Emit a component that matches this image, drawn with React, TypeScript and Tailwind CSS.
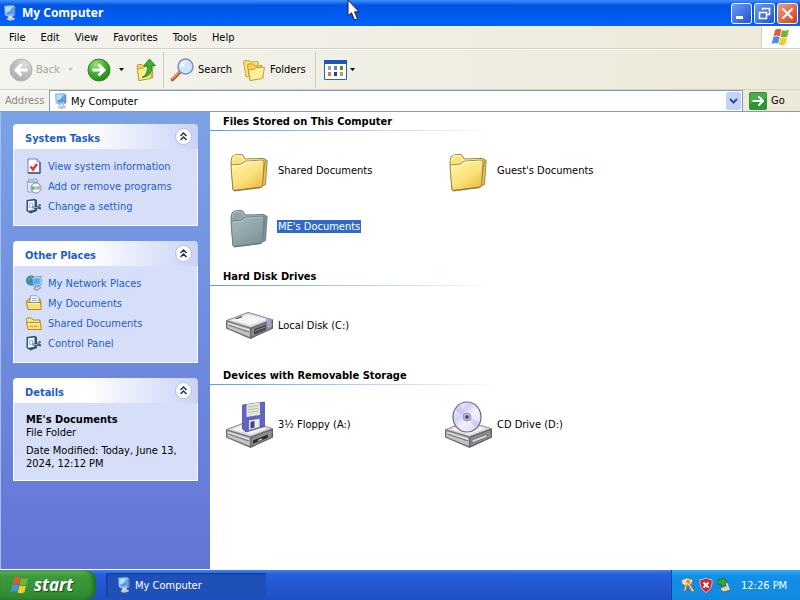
import React from "react";

type IconProps = { className?: string };

function ComputerIcon({ className = "size-4" }: IconProps) {
  return (
    <svg viewBox="0 0 16 16" className={className} aria-hidden="true">
      <path d="M2.500 1 11 .4l2 1.400V10l-2.500 1.200L4.500 11 3 9.500z" fill="#b7d2f3" stroke="#7f9fce" strokeWidth=".6" />
      <path d="M3.500 2 10.800 1.400v7.800L4.600 9.800z" fill="#4a9bf0" />
      <path d="M3.500 2 10.800 1.400 8 6 4.200 7.500z" fill="#b4e0ff" />
      <path d="M11.300 1.300 13 2.400v7.400l-1.700 1z" fill="#5f86c2" />
      <path d="M6 10.800h4.500v1.700l2 .8v1.200L8 15.600 5 14.600v-1.200l1.500-.7z" fill="#e4e9f2" stroke="#8e9cb8" strokeWidth=".6" />
      <path d="M7 14.200l3.500-.6" stroke="#d08a72" strokeWidth=".9" />
    </svg>
  );
}

function WindowsFlag({ className = "size-5" }: IconProps) {
  return (
    <svg viewBox="0 0 20 18" className={className} aria-hidden="true">
      <path d="M4.200 1.800C6.500.4 8.600.6 10.400 1.600L8.900 8.200C7.100 7.200 4.900 7.100 2.600 8.300z" fill="#e8592b" />
      <path d="M11.100 2c1.900 1 4.200 1.100 6.900-.2L16.300 8.600c-2.400 1.300-4.800 1.100-6.700.1z" fill="#72b33c" />
      <path d="M2.400 9.100C4.700 7.900 6.900 8 8.700 9L7.100 15.800C5.300 14.800 2.900 14.700.6 15.900z" fill="#4b8fe0" />
      <path d="M9.400 9.500c1.900 1 4.300 1.100 6.700-.1l-1.700 6.900c-2.400 1.200-4.800 1.100-6.700.1z" fill="#fbc62c" />
    </svg>
  );
}

function FolderIcon({ id, selected = false }: { id: string; selected?: boolean }) {
  const light = selected ? "#abbabd" : "#fff6b0";
  const mid = selected ? "#8fa5a9" : "#fbe27a";
  const dark = selected ? "#7c9296" : "#eebf4e";
  const edge = selected ? "#6a7d84" : "#94803a";
  return (
    <svg viewBox="0 -2 48 48" className="size-12 shrink-0" aria-hidden="true">
      <defs>
        <linearGradient id={id} x1="0" y1="0" x2=".7" y2="1">
          <stop offset="0" stopColor={light} />
          <stop offset=".6" stopColor={mid} />
          <stop offset="1" stopColor={dark} />
        </linearGradient>
      </defs>
      <path d="M6 14 7 9q1-2 4-2.200l5-.3q2 0 3 2.500l1 2 18-.5q3 0 3 3l-1 23L8 42z" fill={mid} stroke={edge} strokeWidth="1" />
      <path d="M7.200 13 8.500 9q1-1.200 3-1.200h4q1.600 0 2.500 2.700l1.500 2 18-.6" fill="none" stroke={light} strokeWidth="1.400" />
      <path d="m40.500 11.500 1.700 1-1.700 24-4 2z" fill={dark} stroke={edge} strokeWidth=".8" />
      <path d="M6 19q0-2 2-2.200l8-.6 4-3 17-1.200q2 0 2 2l-1.500 23q-.2 2-2 2.300L10 42.500q-2 .3-2.100-2z" fill={`url(#${id})`} stroke={edge} strokeWidth=".9" />
      <path d="M7.300 19q0-1 1.400-1.200l8-.6 4-3 16-1.100" fill="none" stroke="#fff" strokeOpacity={selected ? ".25" : ".75"} strokeWidth="1" />
      <path d="m9 42.800 27.500-3.500" stroke={edge} strokeWidth="1.500" />
    </svg>
  );
}

function DriveBase({ y = 0 }: { y?: number }) {
  return (
    <g transform={`translate(0 ${y})`}>
      <path d="M1 19.500 23 11l25 7.500v9L25.500 38 1 27.500z" fill="#66666a" />
      <path d="M2 19.500 23 11.600 47 18.500 25.500 26.500z" fill="#dfdfe2" stroke="#8e8e92" strokeWidth=".7" />
      <path d="m7 19.300 16-5.700 18 5-15.500 5.500z" fill="#f4f4f7" />
      <path d="M2 20.500 25.200 27.500v9L2 27z" fill="#c4c4c7" stroke="#77777b" strokeWidth=".6" />
      <path d="M3.500 24 24 31" stroke="#77777b" strokeWidth="1.200" />
      <path d="M3.500 22.500 24 29.300" stroke="#f2f2f2" strokeWidth=".8" />
      <path d="m26 27.500 21-8v8l-21 9z" fill="#8d8d91" stroke="#555" strokeWidth=".6" />
    </g>
  );
}

function HardDiskIcon() {
  return (
    <svg viewBox="0 0 48 48" className="size-12 shrink-0" aria-hidden="true">
      <DriveBase />
      <path d="m10 17.500 6-2.200 2 .6-6 2.200z" fill="#4b4b50" />
      <path d="m41 17 5.500 1.500v7.500l-3.500 1.300z" fill="#a3a2cc" />
      <path d="m29 28 12-4.600v5.500l-12 4.800z" fill="#4a4a4e" />
      <path d="m30 30 10-3.800" stroke="#999" strokeWidth=".8" />
      <path d="m19 29.500 2 .7" stroke="#6a8f62" strokeWidth="1.400" />
    </svg>
  );
}

function FloppyIcon() {
  return (
    <svg viewBox="0 0 48 48" className="size-12 shrink-0" aria-hidden="true">
      <DriveBase y={10} />
      <path d="m17.500 5 22-3v24.500L21 32l-3.500-3z" fill="#6264c4" stroke="#40429a" strokeWidth=".7" />
      <path d="m21.500 4.400 13.500-1.900v12.500l-13.500 1.900z" fill="#e4e5da" />
      <path d="m23 7 10.500-1.400M23 9.700l10.500-1.400M23 12.400 33.500 11" stroke="#b1b29a" strokeWidth=".8" />
      <path d="m23.500 20 11.500-1.700v9L23.500 30.500z" fill="#e8e9f2" stroke="#444795" strokeWidth=".6" />
      <path d="m25.500 21.700 4-.6v6.500l-4 1z" fill="#42437f" />
      <path d="m28 40.500 15-6v3.200l-15 6z" fill="#2c2c2f" />
      <path d="m33 40.500 4-1.500" stroke="#ddd" strokeWidth="1.300" />
    </svg>
  );
}

function CdDriveIcon() {
  return (
    <svg viewBox="0 0 48 48" className="size-12 shrink-0" aria-hidden="true">
      <defs>
        <linearGradient id="disc" x1="0" y1="0" x2="1" y2="1">
          <stop offset="0" stopColor="#f8f8ff" />
          <stop offset=".35" stopColor="#d2d2f4" />
          <stop offset=".55" stopColor="#f4f0ff" />
          <stop offset="1" stopColor="#d8d8f2" />
        </linearGradient>
      </defs>
      <DriveBase y={10} />
      <path d="m28 40 15-5.700v3L28 43z" fill="#d8d8dc" stroke="#555" strokeWidth=".6" />
      <ellipse cx="23" cy="17" rx="14" ry="15" fill="url(#disc)" stroke="#666a78" strokeWidth="1.200" />
      <path d="m23 17-12-7 5-5zM23 17l12.500 5-4 6z" fill="#c3c1f0" opacity=".65" />
      <circle cx="23" cy="17" r="4" fill="#b7b4dc" stroke="#8582b0" strokeWidth=".7" />
      <circle cx="23" cy="17" r="1.800" fill="#43435c" />
    </svg>
  );
}

function CheckPageIcon() {
  return (
    <svg viewBox="0 0 16 16" className="size-4 shrink-0" aria-hidden="true">
      <path d="M2 1h9l3 3v11H2z" fill="#fff" stroke="#6b7fae" />
      <path d="M14 4v11H2" fill="none" stroke="#3f5487" strokeWidth="1.300" />
      <path d="M11 1v3h3" fill="#c3d2ef" stroke="#6b7fae" strokeWidth=".7" />
      <path d="m4.500 8.500 2.500 3 4-5.500" fill="none" stroke="#e0352b" strokeWidth="2.400" />
    </svg>
  );
}

function ProgramsIcon() {
  return (
    <svg viewBox="0 0 16 16" className="size-4 shrink-0" aria-hidden="true">
      <path d="M1 4h10l2 2v8H2z" fill="#e5ebf6" stroke="#8190b2" strokeWidth=".8" />
      <path d="m2 4 1-3 3 1 2-1.500 3 1L12 4z" fill="#c7d3eb" stroke="#8190b2" strokeWidth=".7" />
      <circle cx="10" cy="10" r="5" fill="#f4f6fb" stroke="#7c8bad" strokeWidth=".9" />
      <path d="M10 10 5.500 7.500v5.500z" fill="#65bd55" />
      <path d="m10 10 4-3v5z" fill="#b4a9e5" />
      <circle cx="10" cy="10" r="1.300" fill="#fff" stroke="#667777" strokeWidth=".6" />
    </svg>
  );
}

function SettingIcon() {
  return (
    <svg viewBox="0 0 16 16" className="size-4 shrink-0" aria-hidden="true">
      <path d="M.5 2 8.500.8 11 2v11l-6.500 2.400L.5 13z" fill="#31517d" />
      <path d="m2 3.300 6.500-.9v9.400L2 12.700z" fill="#f6faff" />
      <path d="M3.500 5.500 6.500 5v4l-3 .5z" fill="none" stroke="#8db3e0" strokeWidth=".9" />
      <path d="M6.500 9.500H11l3.500-3M11 9.500l4 1" fill="none" stroke="#335a72" strokeWidth="2.200" />
      <path d="M7.500 9.500H11l2.700-2.300" fill="none" stroke="#9ec6bf" strokeWidth=".9" />
    </svg>
  );
}

function NetworkIcon() {
  return (
    <svg viewBox="0 0 16 16" className="size-4 shrink-0" aria-hidden="true">
      <circle cx="5" cy="5.500" r="4.700" fill="#3182d5" stroke="#246097" strokeWidth=".5" />
      <path d="M1.500 3.500 5 1l2 1-3 2.500L2 7zM3 7.500l3 .5-1 2z" fill="#58b75d" />
      <path d="m6 2.500 9-1.200v8.700l-7.500 1.200z" fill="#dbe8f9" stroke="#5673a5" strokeWidth=".7" />
      <path d="m7.200 3.700 6.600-.9v6.100L8 9.800z" fill="#49b2f0" />
      <path d="m8 13 3.500-1.700h2l1.500 1.500-4 2.500-3-.8z" fill="#c3cad8" stroke="#606c88" strokeWidth=".6" />
    </svg>
  );
}

function DocumentsIcon({ shared = false }: { shared?: boolean }) {
  return (
    <svg viewBox="0 0 16 16" className="size-4 shrink-0" aria-hidden="true">
      {shared ? (
        <path d="M.5 4q0-1 1-1h4L7 5h7v8H2z" fill="#ffe88a" stroke="#a9821e" strokeWidth=".9" />
      ) : (
        <>
          <path d="M.5 6 3 4h11l1 2-1 8H2z" fill="#f0c64e" stroke="#a9821e" strokeWidth=".9" />
          <path d="M4.500.800H11l2 2V11H3.500z" fill="#fff" stroke="#6f87b6" strokeWidth=".8" />
          <path d="M6 3.500h5M6 5.500h5" stroke="#7fa3dd" strokeWidth=".9" />
        </>
      )}
      <path d="M.5 7.500h14l.8 7H2z" fill="#ffdf70" stroke="#a9821e" strokeWidth=".9" />
      <path d="M2 8.700h11.500" stroke="#fff8cf" />
      {shared && <path d="M4 12q1.500-2.500 3 0M8 12q1.500-2.500 3 0" stroke="#bd9330" fill="none" />}
    </svg>
  );
}

function SmallFolders() {
  return (
    <svg viewBox="0 0 24 24" className="size-6 shrink-0" aria-hidden="true">
      <path d="M1.500 4q0-1.500 1.500-1.500h4L9 4l7-.5v12L4 19z" fill="#f8df72" stroke="#bd9830" strokeWidth=".8" />
      <path d="M5.500 7.500Q5.500 6 7 6h4l2 2 7-.5 1 12L8 22.500z" fill="#f5d257" stroke="#b48c26" strokeWidth=".8" />
      <path d="m6.500 12 6-.7 1.500-1.500 8.500-.5L20.500 20.500 8 22.500z" fill="#ffef9d" stroke="#b48c26" strokeWidth=".8" />
    </svg>
  );
}

function RoundArrow({ id, enabled }: { id: string; enabled: boolean }) {
  return (
    <svg viewBox="0 0 24 24" className={enabled ? "size-6" : "size-6 -scale-x-100"} aria-hidden="true">
      <defs>
        <radialGradient id={id} cx=".35" cy=".25" r=".9">
          <stop offset="0" stopColor={enabled ? "#9be07c" : "#dedede"} />
          <stop offset=".5" stopColor={enabled ? "#3fab2e" : "#bdbdbb"} />
          <stop offset="1" stopColor={enabled ? "#1d7a16" : "#a8a8a6"} />
        </radialGradient>
      </defs>
      <circle cx="12" cy="12" r="11" fill={`url(#${id})`} stroke={enabled ? "#2e8526" : "#b5b5b3"} />
      <path d="M5.500 12h11M11.500 6.500 17 12l-5.500 5.500" fill="none" stroke="#fff" strokeWidth="3" />
    </svg>
  );
}

function Caret({ className }: IconProps) {
  return (
    <svg viewBox="0 0 5 3" className={className} aria-hidden="true">
      <path d="M0 0h5L2.500 3z" fill="currentColor" />
    </svg>
  );
}

function Panel({ title, children }: { title: string; children: React.ReactNode }) {
  return (
    <section>
      <header className="flex h-[25px] items-center justify-between rounded-t-[4px] bg-linear-to-r from-white from-40% to-[#c9d3f7] pr-1.5 pl-3">
        <h2 className="pt-1 font-bold text-[#215dc6]">{title}</h2>
        <button aria-label={`Collapse ${title}`} className="size-[17px]">
          <svg viewBox="0 0 17 17" className="size-[17px]" aria-hidden="true">
            <circle cx="8.500" cy="8.500" r="8" fill="#fff" stroke="#b3bede" />
            <path d="m5.500 8 3-3 3 3M5.500 12l3-3 3 3" fill="none" stroke="#23306a" strokeWidth="1.500" />
          </svg>
        </button>
      </header>
      <div className="border border-t-0 border-white bg-[#d6dff7]">{children}</div>
    </section>
  );
}

function TaskList({ items }: { items: { label: string; icon: React.ReactNode }[] }) {
  return (
    <ul className="pt-[7px] pb-[9px] pl-3">
      {items.map((item) => (
        <li key={item.label}>
          <a href="#" className="flex h-5 items-center gap-1.5 text-[#215dc6]">
            {item.icon}
            {item.label}
          </a>
        </li>
      ))}
    </ul>
  );
}

function Group({ title, children }: { title: string; children: React.ReactNode }) {
  return (
    <section className="mb-5">
      <h2 className="pl-[13px] font-bold">{title}</h2>
      <div className="mt-0.5 h-px w-72 bg-linear-to-r from-[#5c9be8] to-white" />
      <div className="mt-[15px] grid grid-cols-[repeat(auto-fill,219px)] gap-y-2 pl-[15px]">{children}</div>
    </section>
  );
}

function Item({ label, icon, selected = false }: { label: string; icon: React.ReactNode; selected?: boolean }) {
  return (
    <button className="flex h-12 items-center gap-1 text-left">
      {icon}
      <span className={selected ? "bg-[#316ac5] px-px text-white" : "px-px"}>{label}</span>
    </button>
  );
}

const menus = ["File", "Edit", "View", "Favorites", "Tools", "Help"];

export default function App() {
  return (
    <div className="relative flex min-h-screen flex-col overflow-hidden bg-white font-['DejaVu_Sans_Condensed','DejaVu_Sans',sans-serif] text-[11px] leading-[13px] text-black">
      <header className="flex h-[26px] items-center gap-1 bg-linear-to-b from-[#3c90ff] via-[#0054e3] via-20% to-[#0062fb] pr-0.5 pl-0.5">
        <ComputerIcon className="size-4" />
        <h1 className="flex-1 font-['Open_Sans','Noto_Sans',sans-serif] text-[12px] leading-4 font-bold text-white">My Computer</h1>
        <div className="flex gap-0.5">
          <button aria-label="Minimize" className="size-[21px] rounded-[3px] border border-white bg-linear-to-br from-[#6f9bf5] to-[#1f50d6]">
            <svg viewBox="0 0 19 19" aria-hidden="true"><path d="M4 12h7v3H4z" fill="#fff" /></svg>
          </button>
          <button aria-label="Restore" className="size-[21px] rounded-[3px] border border-white bg-linear-to-br from-[#6f9bf5] to-[#1f50d6]">
            <svg viewBox="0 0 19 19" aria-hidden="true">
              <path d="M7.500 6V4.500h7v6H12M7 4.500h8" fill="none" stroke="#fff" strokeWidth="1.500" />
              <path d="M4.500 8.500h7v6h-7zM4 8.500h8" fill="none" stroke="#fff" strokeWidth="1.500" />
            </svg>
          </button>
          <button aria-label="Close" className="size-[21px] rounded-[3px] border border-white bg-linear-to-br from-[#f09a7e] to-[#cf3a12]">
            <svg viewBox="0 0 19 19" aria-hidden="true"><path d="m4.500 4.500 10 10m0-10-10 10" stroke="#fff" strokeWidth="2.200" /></svg>
          </button>
        </div>
      </header>

      <div className="flex h-[23px] border-b border-[#d5d2c0] bg-linear-to-r from-[#f4f4ef] to-[#ece9d8]">
        <nav className="flex flex-1 items-center gap-[15px] pl-[9px]">
          {menus.map((menu) => (
            <button key={menu}>{menu}</button>
          ))}
        </nav>
        <div className="flex w-[39px] items-center justify-center border-l border-[#d5d2c0] bg-white">
          <WindowsFlag className="size-5" />
        </div>
      </div>

      <div className="flex h-[41px] items-center border-t border-b border-t-white border-b-[#d5d2c0] bg-linear-to-r from-[#f4f4ef] to-[#ece9d8] pl-[9px]">
        <button disabled className="flex items-center text-[#aca899]">
          <RoundArrow id="back" enabled={false} />
          <span className="ml-[3px] w-8 text-left">Back</span>
          <Caret className="h-[3px] w-[5px] text-[#c4c1b4]" />
        </button>
        <button aria-label="Forward" className="ml-3.5 flex items-center gap-2">
          <RoundArrow id="forward" enabled />
          <Caret className="h-[3px] w-[5px]" />
        </button>
        <button aria-label="Up" className="ml-2.5">
          <svg viewBox="0 0 24 24" className="size-6" aria-hidden="true">
            <path d="M3 8q0-1.500 1.500-1.500H8l2 2 8-1 1 12L5 22.500z" fill="#f5d257" stroke="#b48c26" strokeWidth=".8" />
            <path d="m3.500 11 6-1 2-1.500 8-.5-3 12.500L5 22.500z" fill="#ffed96" stroke="#b48c26" strokeWidth=".8" />
            <path d="M8 19.500q6-3 5.500-11.500H9.500L15.500 1 21.500 7.500H18q.5 11-10 12z" fill="#3fb033" stroke="#1e7a1b" strokeWidth=".8" />
          </svg>
        </button>
        <div className="ml-[5px] h-9 w-px bg-[#d0cdbf]" />
        <button className="ml-1.5 flex items-center gap-1">
          <svg viewBox="0 0 24 24" className="size-6" aria-hidden="true">
            <path d="M9.500 14.500 2.500 21.500" stroke="#a6603a" strokeWidth="3.600" strokeLinecap="round" />
            <path d="M9 14 2.500 20.500" stroke="#edaa7c" strokeWidth="1.400" strokeLinecap="round" />
            <circle cx="15.500" cy="8.500" r="7.500" fill="#cfe6fd" stroke="#8093c2" strokeWidth="1.600" />
            <path d="M10.500 8.500q0-5 6-5-2 1-3 5z" fill="#fff" />
          </svg>
          Search
        </button>
        <button className="ml-2.5 flex items-center gap-1">
          <SmallFolders />
          Folders
        </button>
        <div className="ml-[9px] h-9 w-px bg-[#d0cdbf]" />
        <button aria-label="Views" className="ml-2 flex items-center gap-[3px]">
          <svg viewBox="0 0 23 20" className="h-5 w-[23px]" aria-hidden="true">
            <path d="M.5.500h22v19H.500z" fill="#fff" stroke="#2c62b8" />
            <path d="M0 0h23v4H0z" fill="#1f55b5" />
            <path d="M4 6h3v4H4z" fill="#8fa2d8" /><path d="M10 6h3v4h-3z" fill="#5c84ca" /><path d="M16 6h3v4h-3z" fill="#3d8d3b" />
            <path d="M4 12h3v4H4z" fill="#df765c" /><path d="M10 12h3v4h-3z" fill="#283b9f" /><path d="M16 12h3v4h-3z" fill="#a2b33b" />
          </svg>
          <Caret className="h-[3px] w-[5px]" />
        </button>
      </div>

      <div className="flex h-[22px] items-stretch border-b border-[#8e9aa3] bg-linear-to-r from-[#f4f4ef] to-[#ece9d8]">
        <label htmlFor="address" className="flex w-[49px] items-center pl-[5px] text-[#8a887b]">Address</label>
        <div className="flex flex-1 items-center border border-b-0 border-[#7f9db9] bg-white pl-[3px]">
          <ComputerIcon className="size-4" />
          <input id="address" defaultValue="My Computer" className="min-w-0 flex-1 pl-0.5 outline-none" />
          <button aria-label="Show addresses" className="mr-px h-[18px] w-[15px] rounded-[2px] bg-[#c3d3fb]">
            <svg viewBox="0 0 15 18" aria-hidden="true"><path d="m4 7 3.500 3.500L11 7" fill="none" stroke="#3c4f82" strokeWidth="2" /></svg>
          </button>
        </div>
        <button className="flex w-[57px] items-center gap-1 pl-1.5">
          <svg viewBox="0 0 18 18" className="size-[18px]" aria-hidden="true">
            <rect width="18" height="18" rx="2" fill="#2f9433" />
            <path d="M1 1h16v6Q8 6 1 12z" fill="#62b761" opacity=".6" />
            <path d="M3.500 9h10M9.500 4.500 14 9l-4.500 4.500" fill="none" stroke="#fff" strokeWidth="2" />
          </svg>
          Go
        </button>
      </div>

      <div className="flex flex-1 border-b border-white">
        <aside className="flex w-[210px] shrink-0 flex-col gap-[15px] border-l border-[#a5bdf0] bg-linear-to-b from-[#7ba2e7] to-[#6375d6] py-3 pr-3 pl-3">
          <Panel title="System Tasks">
            <TaskList
              items={[
                { label: "View system information", icon: <CheckPageIcon /> },
                { label: "Add or remove programs", icon: <ProgramsIcon /> },
                { label: "Change a setting", icon: <SettingIcon /> },
              ]}
            />
          </Panel>
          <Panel title="Other Places">
            <TaskList
              items={[
                { label: "My Network Places", icon: <NetworkIcon /> },
                { label: "My Documents", icon: <DocumentsIcon /> },
                { label: "Shared Documents", icon: <DocumentsIcon shared /> },
                { label: "Control Panel", icon: <SettingIcon /> },
              ]}
            />
          </Panel>
          <Panel title="Details">
            <div className="px-3 py-2.5">
              <p className="font-bold">ME's Documents</p>
              <p>File Folder</p>
              <p className="mt-[5px]">Date Modified: Today, June 13, 2024, 12:12 PM</p>
            </div>
          </Panel>
        </aside>

        <main className="min-w-0 flex-1 pt-[3px]">
          <Group title="Files Stored on This Computer">
            <Item label="Shared Documents" icon={<FolderIcon id="folder-shared" />} />
            <Item label="Guest's Documents" icon={<FolderIcon id="folder-guest" />} />
            <Item label="ME's Documents" icon={<FolderIcon id="folder-me" selected />} selected />
          </Group>
          <Group title="Hard Disk Drives">
            <Item label="Local Disk (C:)" icon={<HardDiskIcon />} />
          </Group>
          <Group title="Devices with Removable Storage">
            <Item label="3½ Floppy (A:)" icon={<FloppyIcon />} />
            <Item label="CD Drive (D:)" icon={<CdDriveIcon />} />
          </Group>
        </main>
      </div>

      <footer className="flex h-[30px] bg-linear-to-b from-[#3d84f0] via-[#245edc] via-15% to-[#1e4fc4] text-white">
        <button className="flex w-24 items-center gap-1 rounded-r-[10px] bg-linear-to-b from-[#6cbb68] via-[#3c9a3c] via-20% to-[#2f8a2f] pl-2.5 font-['Open_Sans','Noto_Sans',sans-serif] text-[17px] leading-5 font-bold italic shadow-[inset_-3px_0_4px_#1f6b24]">
          <WindowsFlag className="size-5" />
          <span className="[text-shadow:1px_1px_1px_#1c4f1c]">start</span>
        </button>
        <button className="my-[3px] ml-2.5 flex w-40 items-center gap-[3px] rounded-[2px] bg-[#1e50b8] pl-2.5 shadow-[inset_1px_1px_2px_#123a8c]">
          <ComputerIcon className="size-4" />
          My Computer
        </button>
        <div className="ml-auto flex w-[129px] items-center gap-0.5 border-l border-[#0b4ba8] bg-linear-to-b from-[#2fb0f6] via-[#118fe9] via-20% to-[#1289e0] pl-2">
          <svg viewBox="0 0 16 16" className="size-4" aria-hidden="true">
            <path d="m1.500 3 6-2L13 3l-2 5-5 1-4-2z" fill="#f2e5c6" stroke="#8c7a4b" strokeWidth=".8" />
            <path d="m9 6 5.500 8-2.500 1-4-7M7.500 7.500 5.500 14.500 3.500 13.500l2-6" fill="#f3d8a0" stroke="#8c6b2b" strokeWidth=".8" />
            <circle cx="8" cy="4.500" r="2" fill="#e78a36" />
          </svg>
          <svg viewBox="0 0 16 16" className="size-4" aria-hidden="true">
            <path d="M8 1q3 2 6 1.500 1 9-6 13Q1 11.500 2 2.500 5 3 8 1z" fill="#d3232c" stroke="#f2b7ba" strokeWidth=".9" />
            <path d="m5.500 5.500 5 5m0-5-5 5" stroke="#fff" strokeWidth="1.900" />
          </svg>
          <svg viewBox="0 0 16 16" className="size-4" aria-hidden="true">
            <path d="m7 8 6 1 2 4-7 2-4-2z" fill="#cfd2c4" stroke="#4f5b4b" strokeWidth=".8" />
            <path d="m10 6 2 4" stroke="#dadccb" strokeWidth="2" />
            <path d="m2 3 6-2 3 4-2 1 1 3-4 1-1-3-3 1z" fill="#35a23a" stroke="#1b6d27" strokeWidth=".8" />
          </svg>
          <time className="ml-[7px]">12:26 PM</time>
        </div>
      </footer>

      <svg viewBox="0 0 13 21" className="pointer-events-none absolute top-0 left-[347px] h-[21px] w-[13px]" aria-hidden="true">
        <path d="M1 0v16l3.500-3.200L7.500 20l3-1.200-3-7H12z" fill="#fff" stroke="#222" strokeWidth="1" />
      </svg>
    </div>
  );
}
